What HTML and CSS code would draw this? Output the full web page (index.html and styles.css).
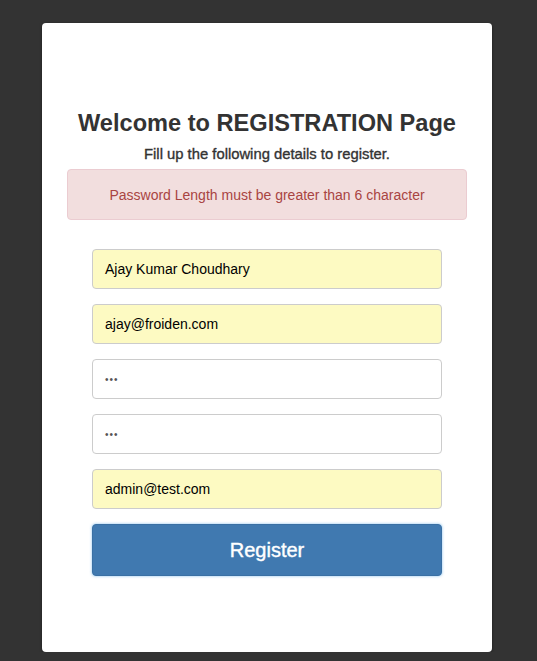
FILE: index.html
```html
<!DOCTYPE html>
<html>
<head>
<meta charset="utf-8">
<link rel="stylesheet" href="styles.css">
</head>
<body>
<div class="card">
  <h1 class="title">Welcome to REGISTRATION Page</h1>
  <p class="subtitle">Fill up the following details to register.</p>
  <div class="alert">Password Length must be greater than 6 character</div>
  <form class="form">
    <div class="field autofill">Ajay Kumar Choudhary</div>
    <div class="field autofill">ajay@froiden.com</div>
    <div class="field password">•••</div>
    <div class="field password">•••</div>
    <div class="field autofill">admin@test.com</div>
    <div class="btn">Register</div>
  </form>
</div>
</body>
</html>
```
FILE: styles.css
```css
html, body {
  margin: 0;
  padding: 0;
  background: #333333;
  font-family: "Liberation Sans", Arial, sans-serif;
}
.card {
  box-sizing: border-box;
  width: 450px;
  height: 629px;
  margin: 23px 0 0 42px;
  background: #ffffff;
  border-radius: 4px;
  box-shadow: 0 1px 3px rgba(0,0,0,0.5);
  padding: 86px 25px 0 25px;
}
.title {
  margin: 0;
  text-align: center;
  font-size: 23.6px;
  font-weight: bold;
  color: #333333;
  line-height: 28px;
}
.subtitle {
  margin: 7px 0 0 0;
  text-align: center;
  font-size: 14.8px;
  font-weight: normal;
  -webkit-text-stroke: 0.35px #333;
  color: #333;
  line-height: 20px;
}
.alert {
  margin-top: 5px;
  height: 51px;
  box-sizing: border-box;
  background: #f2dede;
  border: 1px solid #ebccd1;
  border-radius: 4px;
  color: #a94442;
  font-size: 14px;
  display: flex;
  align-items: center;
  justify-content: center;
}
.form {
  margin: 29px 25px 0 25px;
  display: flex;
  flex-direction: column;
  gap: 15px;
}
.field {
  box-sizing: border-box;
  height: 40px;
  border: 1px solid #cccccc;
  border-radius: 4px;
  padding: 0 12px;
  display: flex;
  align-items: center;
  font-size: 14px;
  color: #000;
  background: #fff;
}
.autofill {
  background: #fdfac2;
}
.password {
  color: #555;
  font-size: 10px;
  letter-spacing: 1px;
}
.btn {
  box-sizing: border-box;
  height: 52px;
  background: #4079b0;
  border: 1px solid #3a70a4;
  border-radius: 4px;
  box-shadow: 0 0 3px rgba(102,175,233,0.8);
  color: #fff;
  font-size: 20px;
  -webkit-text-stroke: 0.4px #fff;
  display: flex;
  align-items: center;
  justify-content: center;
}
```
